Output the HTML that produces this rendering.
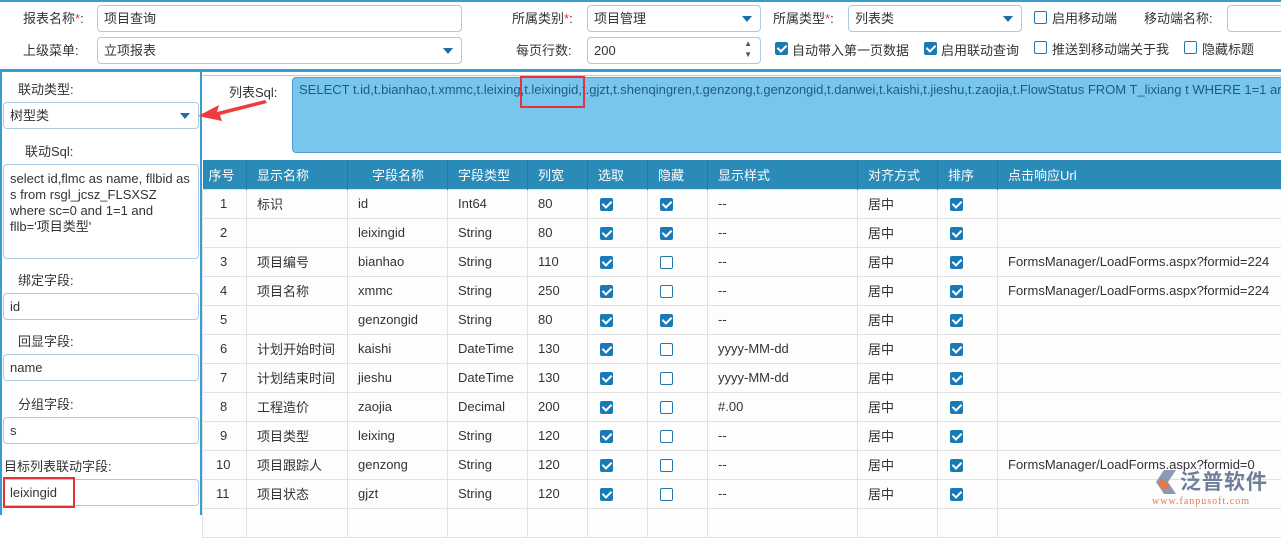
<!DOCTYPE html>
<html><head><meta charset="utf-8"><style>
*{box-sizing:border-box;margin:0;padding:0}
body{width:1281px;height:515px;overflow:hidden;background:#fff;font-family:"Liberation Sans","Noto Sans CJK SC",sans-serif;font-size:13px;color:#333;position:relative}
.a{position:absolute;white-space:nowrap}
.in{position:absolute;border:1px solid #a9cbe4;border-radius:4px;background:#fff;height:27px;line-height:25px;padding-left:6px;color:#333}
.star{color:#e33}
.dd{position:absolute;right:8px;top:10px;width:0;height:0;border-left:5px solid transparent;border-right:5px solid transparent;border-top:6px solid #1a6fa8}
.cb{position:absolute;width:13px;height:13px;border:1.5px solid #2577a8;border-radius:2px;background:#fff}
.cb.on{background:#1a7ab5;border-color:#1a7ab5}
.cb.on:after{content:"";position:absolute;left:3px;top:0px;width:4px;height:7px;border:solid #fff;border-width:0 2px 2px 0;transform:rotate(45deg)}
table{position:absolute;left:202px;top:160px;width:1092px;border-collapse:collapse;table-layout:fixed}
th{background:#2a8ab8;color:#fff;font-weight:normal;height:29px;text-align:left;padding-left:6px;border-right:1px solid #237aa5}
td{height:29px;border:1px solid #e2e2e2;padding-left:10px;position:relative;color:#333;background:#fdfdfd}
td .cb{left:12px;top:8px}
</style></head><body>
<div class="a" style="left:0;top:0;width:1281px;height:2px;background:#3a9bd1"></div>
<div class="a" style="left:23px;top:8px">报表名称<span class="star">*</span>:</div>
<div class="in" style="left:97px;top:5px;width:365px">项目查询</div>
<div class="a" style="left:23px;top:40px">上级菜单:</div>
<div class="in" style="left:97px;top:37px;width:365px">立项报表<span class="dd"></span></div>
<div class="a" style="left:512px;top:8px">所属类别<span class="star">*</span>:</div>
<div class="in" style="left:587px;top:5px;width:174px">项目管理<span class="dd"></span></div>
<div class="a" style="left:516px;top:40px">每页行数:</div>
<div class="in" style="left:587px;top:37px;width:174px">200<span class="a" style="right:8px;top:0;font-size:8px;line-height:11px;color:#555">▲<br>▼</span></div>
<div class="a" style="left:773px;top:8px">所属类型<span class="star">*</span>:</div>
<div class="in" style="left:848px;top:5px;width:174px">列表类<span class="dd"></span></div>
<div class="cb" style="left:1034px;top:11px"></div><div class="a" style="left:1052px;top:8px">启用移动端</div>
<div class="a" style="left:1144px;top:8px">移动端名称:</div>
<div class="in" style="left:1227px;top:5px;width:70px"></div>
<div class="cb on" style="left:775px;top:42px"></div><div class="a" style="left:792px;top:40px">自动带入第一页数据</div>
<div class="cb on" style="left:924px;top:42px"></div><div class="a" style="left:941px;top:40px">启用联动查询</div>
<div class="cb" style="left:1034px;top:41px"></div><div class="a" style="left:1052px;top:39px">推送到移动端关于我</div>
<div class="cb" style="left:1184px;top:41px"></div><div class="a" style="left:1202px;top:39px">隐藏标题</div>
<div class="a" style="left:0;top:69px;width:1281px;height:3px;background:#3a9bd1"></div>
<div class="a" style="left:202px;top:75px;width:1079px;height:1px;background:#a9cbe4"></div>
<div class="a" style="left:200px;top:72px;width:2px;height:443px;background:#3a9bd1"></div>
<div class="a" style="left:0;top:72px;width:2px;height:443px;background:#3a9bd1"></div>
<div class="a" style="left:18px;top:79px">联动类型:</div>
<div class="in" style="left:3px;top:102px;width:196px">树型类<span class="dd"></span></div>
<div class="a" style="left:25px;top:141px">联动Sql:</div>
<div class="in" style="left:3px;top:164px;width:196px;height:95px;line-height:16px;padding:6px 6px;white-space:normal;word-break:normal">select id,flmc as name, fllbid as s from rsgl_jcsz_FLSXSZ where sc=0 and 1=1 and fllb='项目类型'</div>
<div class="a" style="left:18px;top:270px">绑定字段:</div>
<div class="in" style="left:3px;top:293px;width:196px">id</div>
<div class="a" style="left:18px;top:331px">回显字段:</div>
<div class="in" style="left:3px;top:354px;width:196px">name</div>
<div class="a" style="left:18px;top:394px">分组字段:</div>
<div class="in" style="left:3px;top:417px;width:196px">s</div>
<div class="a" style="left:4px;top:456px">目标列表联动字段:</div>
<div class="in" style="left:3px;top:479px;width:196px">leixingid</div>
<div class="a" style="left:3px;top:477px;width:72px;height:31px;border:2px solid #e8303a"></div>
<div class="a" style="left:229px;top:82px">列表Sql:</div>
<div class="a" style="left:292px;top:77px;width:995px;height:76px;background:#78c6ec;border:1px solid #4f9fcf;border-radius:4px;padding:4px 6px;color:#1f5a86;overflow:hidden">SELECT t.id,t.bianhao,t.xmmc,t.leixing,t.leixingid,t.gjzt,t.shenqingren,t.genzong,t.genzongid,t.danwei,t.kaishi,t.jieshu,t.zaojia,t.FlowStatus FROM T_lixiang t WHERE 1=1 and</div>
<div class="a" style="left:520px;top:76px;width:65px;height:32px;border:2px solid #e8303a"></div>
<svg class="a" style="left:195px;top:95px" width="80" height="30"><polygon points="70,5 22,17 24,10 3,21 27,26 25,20 72,8" fill="#ef3b3b"/></svg>
<table>
<colgroup><col width="44"><col width="101"><col width="100"><col width="80"><col width="60"><col width="60"><col width="60"><col width="150"><col width="80"><col width="60"><col width="297"></colgroup>
<tr><th>序号</th><th style="padding-left:10px">显示名称</th><th style="padding-left:24px">字段名称</th><th style="padding-left:10px">字段类型</th><th style="padding-left:10px">列宽</th><th style="padding-left:10px">选取</th><th style="padding-left:10px">隐藏</th><th style="padding-left:10px">显示样式</th><th style="padding-left:10px">对齐方式</th><th style="padding-left:10px">排序</th><th style="padding-left:10px">点击响应Url</th></tr>
<tr><td style="padding-left:17px">1</td><td>标识</td><td>id</td><td>Int64</td><td>80</td><td><span class="cb on"></span></td><td><span class="cb on"></span></td><td>--</td><td>居中</td><td><span class="cb on"></span></td><td></td></tr>
<tr><td style="padding-left:17px">2</td><td></td><td>leixingid</td><td>String</td><td>80</td><td><span class="cb on"></span></td><td><span class="cb on"></span></td><td>--</td><td>居中</td><td><span class="cb on"></span></td><td></td></tr>
<tr><td style="padding-left:17px">3</td><td>项目编号</td><td>bianhao</td><td>String</td><td>110</td><td><span class="cb on"></span></td><td><span class="cb"></span></td><td>--</td><td>居中</td><td><span class="cb on"></span></td><td>FormsManager/LoadForms.aspx?formid=224</td></tr>
<tr><td style="padding-left:17px">4</td><td>项目名称</td><td>xmmc</td><td>String</td><td>250</td><td><span class="cb on"></span></td><td><span class="cb"></span></td><td>--</td><td>居中</td><td><span class="cb on"></span></td><td>FormsManager/LoadForms.aspx?formid=224</td></tr>
<tr><td style="padding-left:17px">5</td><td></td><td>genzongid</td><td>String</td><td>80</td><td><span class="cb on"></span></td><td><span class="cb on"></span></td><td>--</td><td>居中</td><td><span class="cb on"></span></td><td></td></tr>
<tr><td style="padding-left:17px">6</td><td>计划开始时间</td><td>kaishi</td><td>DateTime</td><td>130</td><td><span class="cb on"></span></td><td><span class="cb"></span></td><td>yyyy-MM-dd</td><td>居中</td><td><span class="cb on"></span></td><td></td></tr>
<tr><td style="padding-left:17px">7</td><td>计划结束时间</td><td>jieshu</td><td>DateTime</td><td>130</td><td><span class="cb on"></span></td><td><span class="cb"></span></td><td>yyyy-MM-dd</td><td>居中</td><td><span class="cb on"></span></td><td></td></tr>
<tr><td style="padding-left:17px">8</td><td>工程造价</td><td>zaojia</td><td>Decimal</td><td>200</td><td><span class="cb on"></span></td><td><span class="cb"></span></td><td>#.00</td><td>居中</td><td><span class="cb on"></span></td><td></td></tr>
<tr><td style="padding-left:17px">9</td><td>项目类型</td><td>leixing</td><td>String</td><td>120</td><td><span class="cb on"></span></td><td><span class="cb"></span></td><td>--</td><td>居中</td><td><span class="cb on"></span></td><td></td></tr>
<tr><td style="padding-left:13px">10</td><td>项目跟踪人</td><td>genzong</td><td>String</td><td>120</td><td><span class="cb on"></span></td><td><span class="cb"></span></td><td>--</td><td>居中</td><td><span class="cb on"></span></td><td>FormsManager/LoadForms.aspx?formid=0</td></tr>
<tr><td style="padding-left:13px">11</td><td>项目状态</td><td>gjzt</td><td>String</td><td>120</td><td><span class="cb on"></span></td><td><span class="cb"></span></td><td>--</td><td>居中</td><td><span class="cb on"></span></td><td></td></tr>
<tr><td></td><td></td><td></td><td></td><td></td><td></td><td></td><td></td><td></td><td></td><td></td></tr>
</table>
<svg class="a" style="left:1150px;top:468px" width="30" height="28"><polygon points="14,2 26,2 18,14 26,26 14,26 6,14" fill="#8a9bb5"/><path d="M12 10 a6 6 0 1 0 8 8" fill="#e07a50"/></svg>
<div class="a" style="left:1180px;top:466px;font-size:21px;color:#6f7f99;letter-spacing:1px;font-weight:bold">泛普软件</div>
<div class="a" style="left:1152px;top:496px;font-size:10px;color:#e07a50;font-family:'Liberation Serif',serif;letter-spacing:1px">www.fanpusoft.com</div>
</body></html>
